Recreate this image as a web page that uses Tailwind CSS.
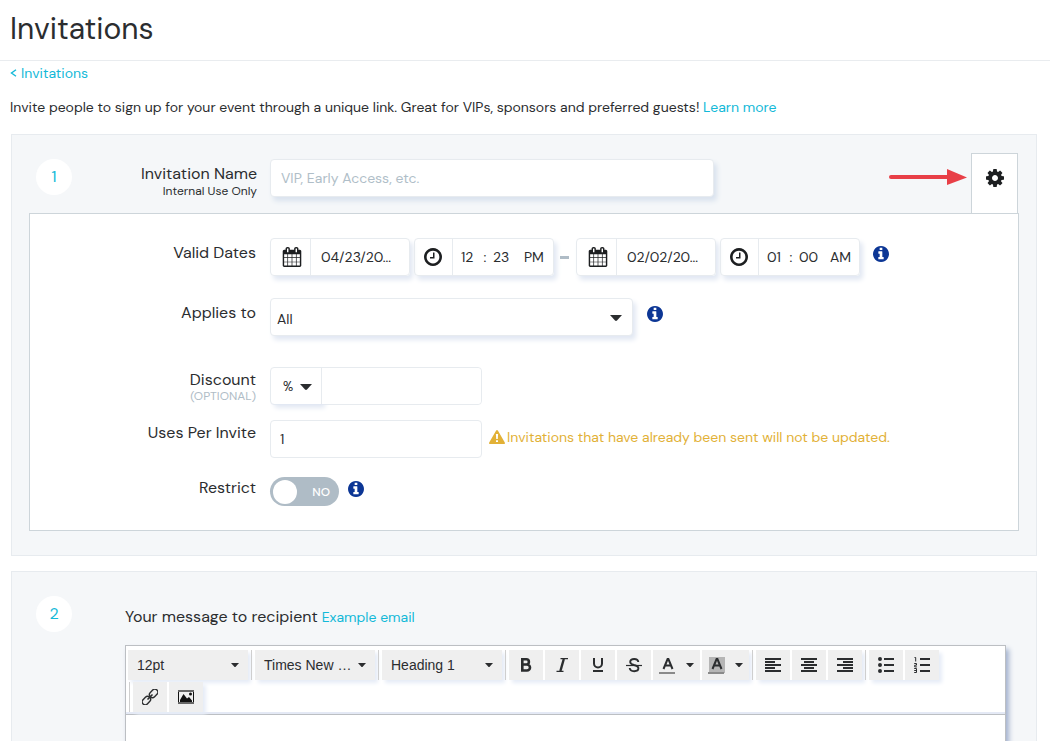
<!DOCTYPE html>
<html lang="en">
<head>
    <meta charset="UTF-8">
    <meta name="viewport" content="width=device-width, initial-scale=1.0">
    <title>Invitations</title>
    <script src="https://cdn.jsdelivr.net/npm/@tailwindcss/browser@4"></script>
</head>
<body class="min-h-screen flex flex-col bg-white text-[#2b2d2f] text-sm font-['DM_Sans','Inter',sans-serif]">

<!-- icon sprite -->
<svg class="hidden">
    <symbol id="calendar" viewBox="0 0 1664 1792"><path fill-rule="evenodd" d="M128 1664h288v-288h-288v288zM480 1664h320v-288h-320v288zM128 1312h288v-320h-288v320zM480 1312h320v-320h-320v320zM128 928h288v-288h-288v288zM864 1664h320v-288h-320v288zM480 928h320v-288h-320v288zM1248 1664h288v-288h-288v288zM864 1312h320v-320h-320v320zM512 448v-288q0-13-9.5-22.5t-22.5-9.5h-64q-13 0-22.5 9.5t-9.5 22.5v288q0 13 9.5 22.5t22.5 9.5h64q13 0 22.5-9.5t9.5-22.5zM1248 1312h288v-320h-288v320zM864 928h320v-288h-320v288zM1248 928h288v-288h-288v288zM1280 448v-288q0-13-9.5-22.5t-22.5-9.5h-64q-13 0-22.5 9.5t-9.5 22.5v288q0 13 9.5 22.5t22.5 9.5h64q13 0 22.5-9.5t9.5-22.5zM1664 384v1280q0 52-38 90t-90 38h-1408q-52 0-90-38t-38-90v-1280q0-52 38-90t90-38h128v-96q0-66 47-113t113-47h64q66 0 113 47t47 113v96h384v-96q0-66 47-113t113-47h64q66 0 113 47t47 113v96h128q52 0 90 38t38 90z"/></symbol>
    <symbol id="clock" viewBox="128 128 1536 1536"><path d="M1024 544v448q0 14-9 23t-23 9h-320q-14 0-23-9t-9-23v-64q0-14 9-23t23-9h224v-352q0-14 9-23t23-9h64q14 0 23 9t9 23zm416 352q0-148-73-273t-198-198-273-73-273 73-198 198-73 273 73 273 198 198 273 73 273-73 198-198 73-273zm224 0q0 209-103 385.5t-279.5 279.5-385.5 103-385.5-103-279.5-279.5-103-385.5 103-385.5 279.5-279.5 385.5-103 385.5 103 279.5 279.5 103 385.5z"/></symbol>
    <symbol id="info" viewBox="128 128 1536 1536"><path d="M1152 1376v-160q0-14-9-23t-23-9h-96v-512q0-14-9-23t-23-9h-320q-14 0-23 9t-9 23v160q0 14 9 23t23 9h96v320h-96q-14 0-23 9t-9 23v160q0 14 9 23t23 9h448q14 0 23-9t9-23zm-128-896v-160q0-14-9-23t-23-9h-192q-14 0-23 9t-9 23v160q0 14 9 23t23 9h192q14 0 23-9t9-23zm640 416q0 209-103 385.5t-279.5 279.5-385.5 103-385.5-103-279.5-279.5-103-385.5 103-385.5 279.5-279.5 385.5-103 385.5 103 279.5 279.5 103 385.5z"/></symbol>
    <symbol id="cog" viewBox="128 128 1536 1536"><path d="M1152 896q0-106-75-181t-181-75-181 75-75 181 75 181 181 75 181-75 75-181zm512-109v222q0 12-8 23t-20 13l-185 28q-19 54-39 91 35 50 107 138 10 12 10 25t-9 23q-27 37-99 108t-94 71q-12 0-26-9l-138-108q-44 23-91 38-16 136-29 186-7 28-36 28h-222q-14 0-24.5-8.5t-11.5-21.5l-28-184q-49-16-90-37l-141 107q-10 9-25 9-14 0-25-11-126-114-165-168-7-10-7-23 0-12 8-23 15-21 51-66.5t54-70.5q-27-50-41-99l-183-27q-13-2-21-12.5t-8-23.5v-222q0-12 8-23t19-13l186-28q14-46 39-92-40-57-107-138-10-12-10-24 0-10 9-23 26-36 98.5-107.5t94.5-71.5q13 0 26 10l138 107q44-23 91-38 16-136 29-186 7-28 36-28h222q14 0 24.5 8.5t11.5 21.5l28 184q49 16 90 37l142-107q9-9 24-9 13 0 25 10 129 119 165 170 7 8 7 22 0 12-8 23-15 21-51 66.5t-54 70.5q26 50 41 98l183 28q13 2 21 12.5t8 23.5z"/></symbol>
    <symbol id="caret" viewBox="0 0 12 6"><path d="M0 0h12L7 5.500Q6 6.400 5 5.500z" fill="#2b2d2f"/></symbol>
</svg>

<header class="h-[61px] px-[10px] border-b border-[#e9ecef]">
    <h1 class="text-[30px] leading-[58px]">Invitations</h1>
</header>

<div class="px-[10px] pt-px">
    <a href="#" class="inline-flex items-center gap-1 leading-5 text-[#13b9d8]">
        <svg class="w-[7px] h-2" viewBox="0 0 7 8" fill="none" stroke="currentColor" stroke-width="1.400"><path d="M6 .8L1.500 4 6 7.200"/></svg>Invitations
    </a>
    <p class="mt-[14px] leading-5">Invite people to sign up for your event through a unique link. Great for VIPs, sponsors and preferred guests! <a href="#" class="text-[#13b9d8]">Learn more</a></p>
</div>

<form class="flex-1 flex flex-col gap-[15px] pt-[17px] pl-[11px] pr-[13px]">

    <!-- Step 1 -->
    <section class="px-[17px] pb-6 bg-[#f5f7f9] border border-[#e7ebef]">
        <div class="flex items-start">
            <div class="w-[228px] shrink-0 mt-6 pl-[7px] flex justify-between">
                <span class="size-9 rounded-full bg-white text-base text-[#13b9d8] flex items-center justify-center">1</span>
                <label for="name" class="pt-[5px] text-right text-base leading-5">Invitation Name<span class="block text-xs leading-[14px]">Internal Use Only</span></label>
            </div>
            <input id="name" type="text" placeholder="VIP, Early Access, etc." class="w-[444px] min-w-0 h-[38px] mt-6 ml-[13px] px-[10px] rounded bg-white border border-[#e7ebef] placeholder:text-[#b0bec8] shadow-[3px_4px_5px_#d9e2ee]">
            <svg class="w-[78px] h-4 mt-[34px] ml-auto mr-1 shrink-0 text-[#e83f47]" viewBox="0 0 78 16"><path d="M2 8h58" stroke="currentColor" stroke-width="4" stroke-linecap="round"/><path d="M58 0l20 8.500L58 16z" fill="currentColor"/></svg>
            <button type="button" aria-label="Settings" class="w-[47px] h-[60px] mt-[18px] mr-px pb-[11px] shrink-0 flex items-center justify-center bg-white border border-b-0 border-[#cdd5da]">
                <svg class="size-[18px] fill-[#1d1f21]"><use href="#cog"/></svg>
            </button>
        </div>

        <div class="pt-6 pb-6 bg-white border border-[#cdd5da]">
            <div class="flex mb-[22px]">
                <label for="start" class="w-[226px] shrink-0 mr-[14px] pt-[5px] text-right text-base leading-5">Valid Dates</label>
                <div class="flex h-[38px]">
                    <div class="w-[140px] flex rounded border border-[#e7ebef] shadow-[3px_4px_5px_#e2e8f3]">
                        <span class="w-10 shrink-0 flex items-center justify-center border-r border-[#e7ebef]"><svg class="w-5 h-5 ml-[2px] fill-[#1d1f21]"><use href="#calendar"/></svg></span>
                        <input id="start" type="text" value="04/23/20..." class="w-full min-w-0 pl-[10px]">
                    </div>
                    <div class="w-[140px] ml-1 flex rounded border border-[#e7ebef] shadow-[3px_4px_5px_#e2e8f3]">
                        <span class="w-[38px] shrink-0 pr-[2px] flex items-center justify-center border-r border-[#e7ebef]"><svg class="size-[18px] fill-[#1d1f21]"><use href="#clock"/></svg></span>
                        <div class="flex-1 flex items-center pl-2">
                            <input type="text" aria-label="Start hour" value="12" class="w-5">
                            <span class="w-2 mr-1 text-center">:</span>
                            <input type="text" aria-label="Start minute" value="23" class="w-[31px]">
                            <input type="text" aria-label="Start AM or PM" value="PM" class="w-6">
                        </div>
                    </div>
                    <span class="w-[9px] h-[3px] mt-[18px] mx-[6px] bg-[#afbcc6]"></span>
                    <div class="w-[140px] ml-px flex rounded border border-[#e7ebef] shadow-[3px_4px_5px_#e2e8f3]">
                        <span class="w-10 shrink-0 flex items-center justify-center border-r border-[#e7ebef]"><svg class="w-5 h-5 ml-[2px] fill-[#1d1f21]"><use href="#calendar"/></svg></span>
                        <input type="text" aria-label="End date" value="02/02/20..." class="w-full min-w-0 pl-[10px]">
                    </div>
                    <div class="w-[140px] ml-1 flex rounded border border-[#e7ebef] shadow-[3px_4px_5px_#e2e8f3]">
                        <span class="w-[38px] shrink-0 pr-[2px] flex items-center justify-center border-r border-[#e7ebef]"><svg class="size-[18px] fill-[#1d1f21]"><use href="#clock"/></svg></span>
                        <div class="flex-1 flex items-center pl-2">
                            <input type="text" aria-label="End hour" value="01" class="w-5">
                            <span class="w-2 mr-1 text-center">:</span>
                            <input type="text" aria-label="End minute" value="00" class="w-[31px]">
                            <input type="text" aria-label="End AM or PM" value="AM" class="w-6">
                        </div>
                    </div>
                    <svg class="size-4 mt-2 ml-[13px] fill-[#0c3695]"><use href="#info"/></svg>
                </div>
            </div>

            <div class="flex mb-[31px]">
                <label for="applies" class="w-[226px] shrink-0 mr-[14px] pt-[5px] text-right text-base leading-5">Applies to</label>
                <div class="relative w-[363px]">
                    <select id="applies" class="appearance-none w-full h-[38px] pl-[6px] pt-[3px] rounded bg-white border border-[#e7ebef] shadow-[3px_4px_5px_#e2e8f3]"><option>All</option></select>
                    <svg class="absolute right-[11px] top-[17px] w-3 h-[6px] pointer-events-none"><use href="#caret"/></svg>
                </div>
                <svg class="size-4 mt-2 ml-[14px] fill-[#0c3695]"><use href="#info"/></svg>
            </div>

            <div class="flex mb-[15px]">
                <label for="discount" class="w-[226px] shrink-0 mr-[14px] pt-[3px] text-right text-base leading-5">Discount<span class="block text-xs leading-3 text-[#afbcc6]">(OPTIONAL)</span></label>
                <div class="flex w-[212px] h-[38px] rounded border border-[#e7ebef]">
                    <div class="relative w-[51px] shrink-0 border-r border-[#e7ebef] rounded-l shadow-[3px_4px_5px_#e2e8f3]">
                        <select aria-label="Discount type" class="appearance-none w-full h-9 pt-[2px] pl-3 bg-transparent text-[13px]"><option>%</option></select>
                        <svg class="absolute right-[9px] top-4 w-3 h-[6px] pointer-events-none"><use href="#caret"/></svg>
                    </div>
                    <input id="discount" type="text" class="relative w-full min-w-0 px-[10px] rounded-r bg-white">
                </div>
            </div>

            <div class="flex mb-[19px]">
                <label for="uses" class="w-[226px] shrink-0 mr-[14px] pt-[3px] text-right text-base leading-5">Uses Per Invite</label>
                <input id="uses" type="text" value="1" class="w-[212px] h-[38px] px-[9px] rounded border border-[#e7ebef]">
                <p class="flex items-center h-[34px] ml-[7px] gap-[2px] text-[#e2b137]">
                    <svg class="w-4 h-[14px]" viewBox="0 0 16 14"><path fill="currentColor" fill-rule="evenodd" d="M7 .7Q8-.5 9 .7L15.800 12.500Q16.200 14 15 14H1Q-.2 14 .2 12.500zM6.900 4l.3 5h1.600l.3-5zM7 10.200V12h2v-1.800z"/></svg>
                    Invitations that have already been sent will not be updated.
                </p>
            </div>

            <div class="flex">
                <label for="restrict" class="w-[226px] shrink-0 mr-[14px] pt-px text-right text-base leading-5">Restrict</label>
                <label class="w-[69px] h-[29px] pl-[3px] pr-[9px] flex items-center justify-between rounded-full bg-[#afbcc6] text-white text-xs font-medium cursor-pointer">
                    <input id="restrict" type="checkbox" class="appearance-none size-6 rounded-full bg-white">NO
                </label>
                <svg class="size-4 mt-1 ml-[9px] fill-[#0c3695]"><use href="#info"/></svg>
            </div>
        </div>
    </section>

    <!-- Step 2 -->
    <section class="flex-1 flex flex-col pt-6 pl-6 pr-[30px] bg-[#f5f7f9] border border-b-0 border-[#e7ebef]">
        <div class="flex items-center">
            <span class="size-9 mr-[53px] rounded-full bg-white text-base text-[#13b9d8] flex items-center justify-center">2</span>
            <label for="message" class="pt-[6px] text-base leading-5">Your message to recipient</label>
            <a href="#" class="pt-[6px] ml-1 leading-5 text-[#13b9d8]">Example email</a>
        </div>

        <div class="flex-1 flex flex-col mt-[13px] ml-[89px] bg-white border border-b-0 border-[#bcbfc3] shadow-[3px_4px_5px_#a3b2cf] font-['Liberation_Sans',Arial,sans-serif]">
            <div class="border-b border-[#bcbfc3]">
                <div class="flex flex-wrap gap-[2px] pt-1 pl-[2px] border-b-2 border-[#e4e9f5]">
                    <div class="bg-white shadow-[3px_3px_4px_#e6ecf7]">
                        <button type="button" class="w-[120px] h-[30px] px-[9px] flex items-center justify-between bg-[#efefef]">12pt <svg class="w-2 h-1"><use href="#caret"/></svg></button>
                    </div>
                    <div class="flex gap-[2px]">
                        <span class="w-px mx-px bg-[#cfcfcf]"></span>
                        <div class="bg-white shadow-[3px_3px_4px_#e6ecf7]">
                            <button type="button" class="w-[120px] h-[30px] px-[9px] flex items-center justify-between bg-[#efefef]">Times New … <svg class="w-2 h-1"><use href="#caret"/></svg></button>
                        </div>
                    </div>
                    <div class="flex gap-[2px]">
                        <span class="w-px mx-px bg-[#cfcfcf]"></span>
                        <div class="bg-white shadow-[3px_3px_4px_#e6ecf7]">
                            <button type="button" class="w-[120px] h-[30px] px-[9px] flex items-center justify-between bg-[#efefef]">Heading 1 <svg class="w-2 h-1"><use href="#caret"/></svg></button>
                        </div>
                    </div>
                    <div class="flex gap-[2px]">
                        <span class="w-px mx-px bg-[#cfcfcf]"></span>
                        <div class="flex gap-[2px] bg-white shadow-[3px_3px_4px_#e6ecf7]">
                            <button type="button" aria-label="Bold" class="w-[34px] h-[30px] flex items-center justify-center bg-[#efefef]">
                                <svg class="size-4" viewBox="0 0 16 16" fill="none" stroke="#2b2d2f" stroke-width="2.600"><path d="M4.300 2.300h4a2.600 2.600 0 0 1 0 5.200h-4zM4.300 7.500h4.700a3 3 0 0 1 0 6h-4.700z"/></svg>
                            </button>
                            <button type="button" aria-label="Italic" class="w-[34px] h-[30px] flex items-center justify-center bg-[#efefef]">
                                <svg class="size-4" viewBox="0 0 16 16" fill="none" stroke="#2b2d2f"><path d="M9.800 2L6.400 14" stroke-width="2.400"/><path d="M6.500 1.600h7.500M2.500 14.400h7" stroke-width="1.200"/></svg>
                            </button>
                            <button type="button" aria-label="Underline" class="w-[34px] h-[30px] flex items-center justify-center bg-[#efefef]">
                                <svg class="size-4" viewBox="0 0 16 16" fill="none" stroke="#2b2d2f" stroke-width="2"><path d="M4 1v5.500a4 4 0 0 0 8 0V1M3 14h10"/></svg>
                            </button>
                            <button type="button" aria-label="Strikethrough" class="w-[34px] h-[30px] flex items-center justify-center bg-[#efefef]">
                                <svg class="size-4" viewBox="0 0 16 16" fill="none" stroke="#2b2d2f" stroke-width="1.900"><path d="M12.300 5Q12 2 8.200 2 4.200 2 4.200 5q0 2 3.800 3 4.400 1 4.400 3.300 0 2.900-4.200 2.900-4.200 0-4.500-3.200"/><path d="M0 8.500h16" stroke-width="1.200"/></svg>
                            </button>
                            <button type="button" aria-label="Text color" class="w-[47px] h-[30px] px-[6px] flex items-center justify-between bg-[#efefef]">
                                <svg class="w-4 h-[18px]" viewBox="0 0 16 18" fill="none" stroke="#2b2d2f" stroke-width="2"><path d="M4.500 13L8.600 3h.8l4.100 10M6 9.500h6"/><path d="M0 17h16" stroke="#8a8a8a"/></svg>
                                <svg class="w-2 h-1"><use href="#caret"/></svg>
                            </button>
                            <button type="button" aria-label="Background color" class="w-[47px] h-[30px] px-[6px] flex items-center justify-between bg-[#efefef]">
                                <svg class="w-[17px] h-[18px]" viewBox="0 0 17 18" fill="none" stroke="#2b2d2f" stroke-width="2"><path d="M1 1h16v16H1z" fill="#b5b5b5" stroke="none"/><path d="M4.500 13L8.600 3h.8l4.100 10M6 9.500h6"/><path d="M0 17h16" stroke="#8a8a8a"/></svg>
                                <svg class="w-2 h-1"><use href="#caret"/></svg>
                            </button>
                        </div>
                    </div>
                    <div class="flex gap-[2px]">
                        <span class="w-px mx-px bg-[#cfcfcf]"></span>
                        <div class="flex gap-[2px] bg-white shadow-[3px_3px_4px_#e6ecf7]">
                            <button type="button" aria-label="Align left" class="w-[34px] h-[30px] flex items-center justify-center bg-[#efefef]">
                                <svg class="size-4" viewBox="0 0 16 16" stroke="#2b2d2f" stroke-width="2"><path d="M0 2h16M0 5h10M0 8h16M0 11h10M0 14h16"/></svg>
                            </button>
                            <button type="button" aria-label="Align center" class="w-[34px] h-[30px] flex items-center justify-center bg-[#efefef]">
                                <svg class="size-4" viewBox="0 0 16 16" stroke="#2b2d2f" stroke-width="2"><path d="M0 2h16M3 5h10M0 8h16M3 11h10M0 14h16"/></svg>
                            </button>
                            <button type="button" aria-label="Align right" class="w-[34px] h-[30px] flex items-center justify-center bg-[#efefef]">
                                <svg class="size-4" viewBox="0 0 16 16" stroke="#2b2d2f" stroke-width="2"><path d="M0 2h16M6 5h10M0 8h16M6 11h10M0 14h16"/></svg>
                            </button>
                        </div>
                    </div>
                    <div class="flex gap-[2px]">
                        <span class="w-px mx-px bg-[#cfcfcf]"></span>
                        <div class="flex gap-[2px] bg-white shadow-[3px_3px_4px_#e6ecf7]">
                            <button type="button" aria-label="Bullet list" class="w-[34px] h-[30px] flex items-center justify-center bg-[#efefef]">
                                <svg class="size-4" viewBox="0 0 16 16" stroke="#2b2d2f" stroke-width="2"><path d="M6 2h10M6 8h10M6 14h10"/><path d="M2 2h0M2 8h0M2 14h0" stroke-width="4" stroke-linecap="round"/></svg>
                            </button>
                            <button type="button" aria-label="Numbered list" class="w-[34px] h-[30px] flex items-center justify-center bg-[#efefef]">
                                <svg class="size-4" viewBox="0 0 16 16" fill="none" stroke="#2b2d2f"><path d="M6 2h10M6 8h10M6 14h10" stroke-width="2"/><path d="M.5.500h1.200v4M.2 6.500h2.300v1.700H.7v1.700h2.200M.2 11.500h2.300v4H.2M.2 13.500h2.300"/></svg>
                            </button>
                        </div>
                    </div>
                    <div class="flex gap-[2px]">
                        <span class="w-px mx-px bg-[#cfcfcf]"></span>
                        <div class="flex gap-[2px] bg-white shadow-[3px_3px_4px_#e6ecf7]">
                            <button type="button" aria-label="Insert link" class="w-[34px] h-[30px] flex items-center justify-center bg-[#efefef]">
                                <svg class="size-4" viewBox="0 0 16 16" fill="none" stroke="#2b2d2f" stroke-width="1.400"><g transform="rotate(-45 8 8)"><rect x="-1.800" y="5" width="9.300" height="6" rx="3"/><rect x="8.500" y="5" width="9.300" height="6" rx="3"/><path d="M4.500 8h7" stroke-width="1.600"/></g></svg>
                            </button>
                            <button type="button" aria-label="Insert image" class="w-[34px] h-[30px] flex items-center justify-center bg-[#efefef]">
                                <svg class="w-4 h-[14px]" viewBox="0 0 16 14"><path d="M.5 0v14M15.500 0v14" stroke="#111"/><path d="M0 1h16M0 13h16" stroke="#666" stroke-width="2"/><path d="M2 12V10l3.500-6L9 8.500l2-1.500 3 3.500V12z" fill="#111"/><circle cx="12.500" cy="4" r="1.500" fill="#111"/></svg>
                            </button>
                        </div>
                    </div>
                </div>
            </div>
            <textarea id="message" class="flex-1 min-h-[26px] h-0 resize-none bg-white"></textarea>
        </div>
    </section>
</form>

</body>
</html>
